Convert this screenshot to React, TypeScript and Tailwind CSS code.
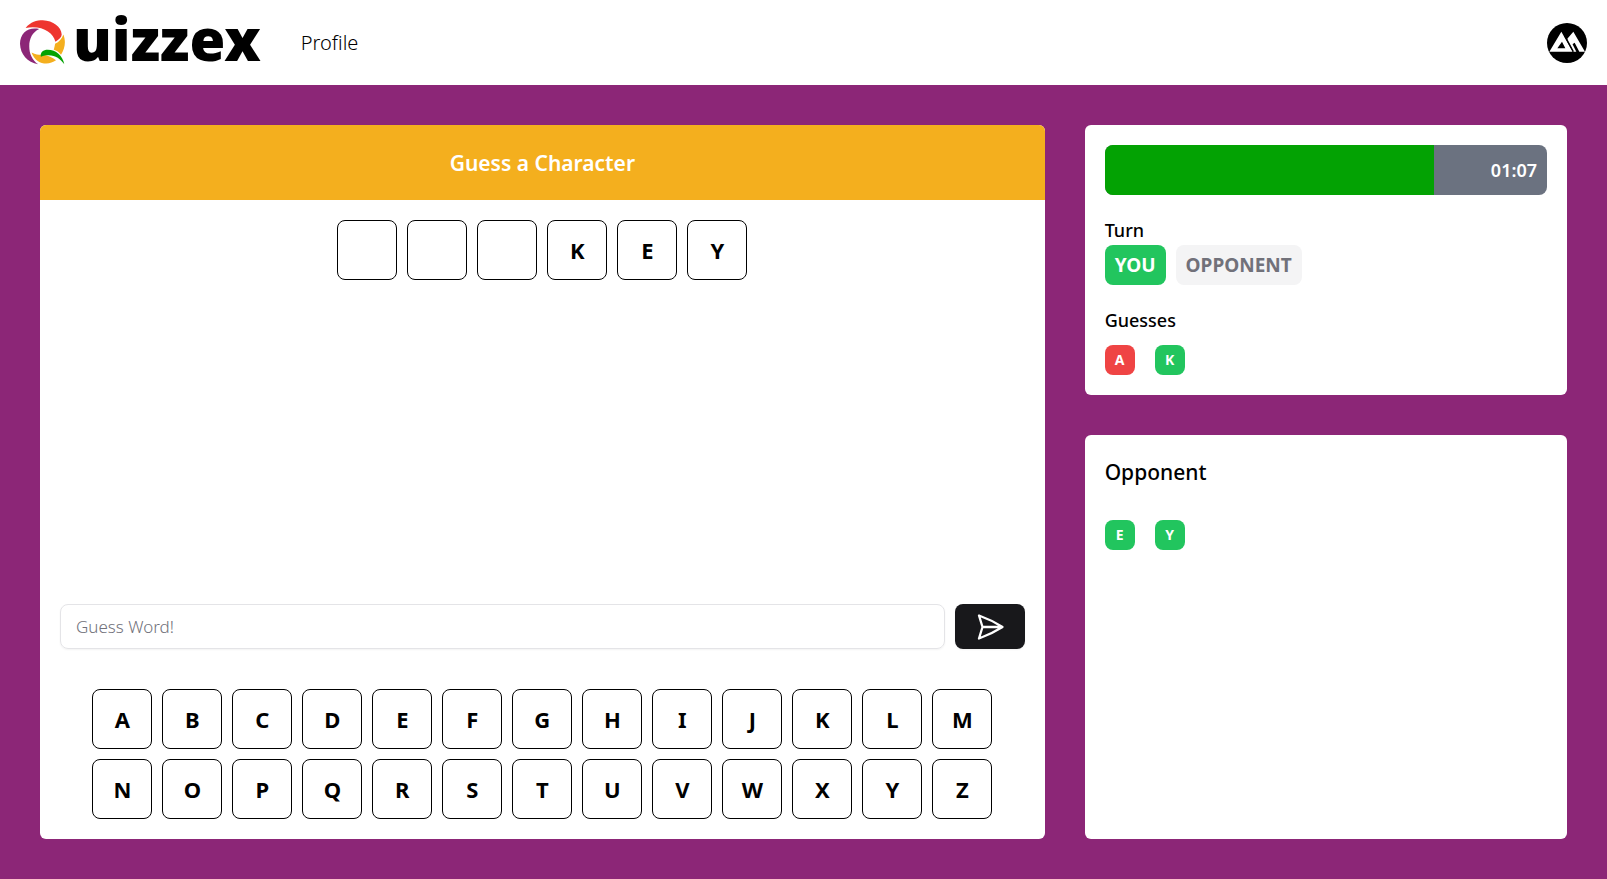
import type { ReactNode } from "react";

const word = ["", "", "", "K", "E", "Y"];
const keys = "ABCDEFGHIJKLMNOPQRSTUVWXYZ".split("");
const secondsLeft = 67;
const secondsTotal = 90;

function Logo() {
  return (
    <a href="#" aria-label="Quizzex" className="flex items-center gap-2">
      <svg viewBox="60 60 136 136" className="size-[45px]" aria-hidden="true">
        <path fill="#8c2677" d="M118 87C86 80 60 98 60 132C61 164 82 188 115 194C97 180 88 163 88 139C88 115 98 97 118 87Z" />
        <path fill="#ee352f" d="M77 84C92 66 110 61 129 61C160 62 185 81 186 104C186 112 178 119 167 126C160 97 127 76 77 84Z" />
        <path fill="#f4af1e" d="M191 104C200 127 195 147 184 165C178 157 171 153 162 150C164 145 165 138 166 132C178 126 187 118 191 104Z" />
        <path fill="#f4af1e" d="M95 158C110 166 120 165 130 165C146 167 157 173 169 182C146 199 108 195 95 158Z" />
        <path fill="#03a203" d="M123 171C121 157 130 150 144 150C169 151 188 166 194 194C179 173 157 159 123 171Z" />
      </svg>
      <span className="pb-2 font-['Noto_Sans',sans-serif] text-[58px] leading-[60px] font-black">uizzex</span>
    </a>
  );
}

function Avatar() {
  return (
    <button type="button" aria-label="Account" className="size-10 rounded-full">
      <svg viewBox="0 0 120 120" className="size-10">
        <circle cx="60" cy="60" r="60" fill="#000" />
        <path
          fill="#fff"
          fillRule="evenodd"
          d="M7 86L43 26L77 86ZM31 76H55L45 56Z"
        />
        <path fill="#fff" d="M61 47L79 26L114 86H97L83 59L74 65L62 53Z" />
        <path fill="#fff" d="M62 52L76 62L88 86H79Z" />
        <path stroke="#000" strokeWidth="4" d="M53 38L79 86" />
      </svg>
    </button>
  );
}

function Tile({ children }: { children?: ReactNode }) {
  return (
    <div className="flex size-[60px] items-center justify-center rounded-lg border border-black text-[22px] font-bold">
      {children}
    </div>
  );
}

function Chip({ letter, hit }: { letter: string; hit: boolean }) {
  return (
    <li
      className={`flex size-[30px] items-center justify-center rounded-lg text-sm font-bold text-white ${
        hit ? "bg-[#22c55e]" : "bg-[#ef4444]"
      }`}
    >
      {letter}
    </li>
  );
}

export default function App() {
  return (
    <div className="flex min-h-screen flex-col bg-[#8c2677] font-['Noto_Sans',sans-serif] text-black">
      <header className="flex h-[85px] items-center justify-between bg-white px-5">
        <div className="flex items-center gap-10">
          <Logo />
          <nav>
            <a href="#" className="text-xl font-light">Profile</a>
          </nav>
        </div>
        <Avatar />
      </header>

      <main className="grid grow grid-cols-3 gap-10 p-10">
        <section className="col-span-2 flex flex-col overflow-hidden rounded-md bg-white">
          <h1 className="bg-[#f4af1e] pt-[21px] pb-[19px] text-center text-[21px] leading-[35px] font-semibold text-white">
            Guess a Character
          </h1>
          <div className="flex grow flex-col p-5">
            <div className="flex justify-center gap-2.5">
              {word.map((letter, i) => (
                <Tile key={i}>{letter}</Tile>
              ))}
            </div>
            <form className="mt-auto flex gap-2.5" onSubmit={(e) => e.preventDefault()}>
              <input
                type="text"
                aria-label="Guess Word"
                placeholder="Guess Word!"
                className="h-[45px] min-w-0 grow rounded-lg border border-[#e4e4e7] px-[15px] text-[17px] font-light shadow-xs placeholder:text-[#71717a]"
              />
              <button
                type="submit"
                aria-label="Send"
                className="flex h-[45px] w-[70px] items-center justify-center rounded-lg bg-[#18181b] text-white shadow-xs"
              >
                <svg viewBox="0 0 30 30" className="size-[30px]" fill="none" stroke="currentColor" strokeWidth="2.3" strokeLinecap="round" strokeLinejoin="round" aria-hidden="true">
                  <path d="M7.500 15L4 3.500Q16.500 8 27.500 15Q16.500 22 4 26.500ZM7.500 15H27" />
                </svg>
              </button>
            </form>
            <div className="mt-10 flex flex-wrap justify-center gap-2.5 px-5">
              {keys.map((letter) => (
                <button
                  key={letter}
                  type="button"
                  className="size-[60px] rounded-lg border border-black text-[22px] font-bold"
                >
                  {letter}
                </button>
              ))}
            </div>
          </div>
        </section>

        <div className="flex flex-col gap-10">
          <section className="rounded-md bg-white p-5">
            <div className="grid h-[50px] overflow-hidden rounded-lg bg-[#6b7280]">
              <div
                className="col-start-1 row-start-1 bg-[#03a203]"
                style={{ width: `${(secondsLeft / secondsTotal) * 100}%` }}
              />
              <span className="col-start-1 row-start-1 self-center justify-self-end pr-2.5 text-lg font-semibold text-white">
                01:07
              </span>
            </div>
            <h2 className="mt-5 text-lg leading-[30px] font-medium">Turn</h2>
            <div className="flex gap-2.5 text-[19px] font-bold">
              <span className="flex h-10 items-center rounded-lg bg-[#22c55e] px-2.5 text-white">YOU</span>
              <span className="flex h-10 items-center rounded-lg bg-[#f4f4f5] px-2.5 text-[#71717a]">OPPONENT</span>
            </div>
            <h2 className="mt-5 text-lg leading-[30px] font-medium">Guesses</h2>
            <ul className="mt-2.5 flex gap-5">
              <Chip letter="A" hit={false} />
              <Chip letter="K" hit />
            </ul>
          </section>

          <section className="grow rounded-md bg-white p-5">
            <h2 className="text-[21px] leading-[35px] font-medium">Opponent</h2>
            <ul className="mt-[30px] flex gap-5">
              <Chip letter="E" hit />
              <Chip letter="Y" hit />
            </ul>
          </section>
        </div>
      </main>
    </div>
  );
}
